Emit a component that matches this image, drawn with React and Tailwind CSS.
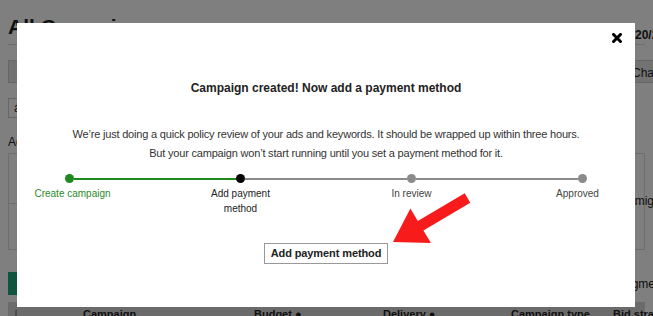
import React from 'react';

const steps = [
  { label: 'Create campaign', dot: 'bg-[#1e8a1e]', text: 'ml-[6px] text-[#2a8a2a]' },
  { label: ['Add payment', 'method'], dot: 'bg-black', text: 'text-[#222]' },
  { label: 'In review', dot: 'bg-[#8a8a8a]', text: 'text-[#444]' },
  { label: 'Approved', dot: 'bg-[#8a8a8a]', text: 'mr-[10px] text-[#444]' },
];

const Step = ({ step }) => (
  <div className="flex w-[9px] shrink-0 flex-col items-center">
    <div className={`h-[9px] w-[9px] rounded-full ${step.dot}`} />
    <div className={`mt-[3px] whitespace-nowrap text-center text-[10px] leading-[15px] ${step.text}`}>
      {Array.isArray(step.label) ? (
        <>
          {step.label[0]}
          <br />
          {step.label[1]}
        </>
      ) : (
        step.label
      )}
    </div>
  </div>
);

const Stepper = () => (
  <div className="mx-auto flex w-[522px] items-start">
    <Step step={steps[0]} />
    <div className="mt-[4px] h-[2px] flex-1 bg-[#1e8a1e]" />
    <Step step={steps[1]} />
    <div className="mt-[4px] h-[2px] flex-1 bg-[#8a8a8a]" />
    <Step step={steps[2]} />
    <div className="mt-[4px] h-[2px] flex-1 bg-[#8a8a8a]" />
    <Step step={steps[3]} />
  </div>
);

// the page behind the dialog
const Page = () => (
  <div className="flex flex-col px-2 text-[#222]">
    <div className="flex h-[45px] shrink-0 items-start border-b border-[#ddd] pt-[16px]">
      <h1 className="text-[21px] font-bold leading-[22px]">All Campaigns</h1>
      <span className="ml-auto w-[20px] shrink-0 whitespace-nowrap pt-[10px] text-[12px] font-bold">1/20/2017</span>
    </div>
    <div className="mt-[15px] flex h-[23px] shrink-0 justify-between">
      <div className="w-[90px] border border-[#ccc] bg-[#e4e4e4]" />
      <div className="mr-[-40px] w-[60px] border border-[#ccc] bg-[#e4e4e4] pl-[6px] pt-[3px] text-[12px]">Change</div>
    </div>
    <div className="mt-[15px] flex h-[20px] w-[70px] shrink-0 items-center border border-[#ccc] pl-[5px] text-[12px]">áll</div>
    <div className="mt-[17px] h-[15px] shrink-0 text-[12px] leading-[15px]">Ad groups</div>
    <div className="mt-[3px] flex h-[97px] shrink-0 flex-col border border-[#ddd]">
      <div className="flex h-[50px] shrink-0 justify-end border-b border-[#ddd]" />
      <div className="mt-[-10px] flex justify-end text-[12px] leading-[14px]">
        <span className="mr-[-20px]">might</span>
      </div>
    </div>
    <div className="mt-[22px] flex h-[23px] shrink-0 items-center justify-between">
      <div className="h-[23px] w-[60px] bg-[#1fa87f]" />
      <span className="mr-[-20px] text-[12px]">Segment</span>
    </div>
    <div className="mt-[7px] flex h-[24px] shrink-0 items-center whitespace-nowrap bg-[#d6d6d6] text-[11px] font-bold">
      <div className="ml-[7px] h-[9px] w-[9px] border border-[#999] bg-white" />
      <div className="ml-[27px] h-[8px] w-[8px] rounded-full bg-[#555]" />
      <span className="ml-[39px] w-[171px] shrink-0">Campaign</span>
      <span className="w-[129px] shrink-0">Budget ●</span>
      <span className="w-[128px] shrink-0">Delivery ●</span>
      <span className="w-[102px] shrink-0">Campaign type</span>
      <span className="shrink-0">Bid strategy</span>
    </div>
  </div>
);

const Arrow = () => (
  <svg className="pointer-events-none absolute left-0 top-0" width="653" height="316">
    <polygon
      fill="#f71b1b"
      points="393,242 431,243 423.4,230.4 470.3,202.7 464.7,193.3 417.8,221 410.4,208.5"
    />
  </svg>
);

export default function App() {
  return (
    <div className="relative h-[316px] w-[653px] overflow-hidden bg-white font-['Liberation_Sans',Arial,sans-serif]">
      <Page />
      <div className="absolute inset-0 bg-black/50" />
      <div className="absolute left-[17px] top-[23px] flex h-[284px] w-[618px] flex-col bg-white">
        <div className="flex justify-end pr-[13px] pt-[10px]">
          <svg width="10" height="10" viewBox="0 0 10 10">
            <path d="M1.5 1.5 L8.5 8.5 M8.5 1.5 L1.5 8.5" stroke="#000" strokeWidth="3" strokeLinecap="square" />
          </svg>
        </div>
        <h2 className="mt-[37px] text-center text-[12px] font-bold leading-[16px] text-[#222]">
          Campaign created! Now add a payment method
        </h2>
        <div className="mt-[29px] text-center text-[11px] leading-[19px] tracking-[-0.19px] text-[#333]">
          <p>We’re just doing a quick policy review of your ads and keywords. It should be wrapped up within three hours.</p>
          <p>But your campaign won’t start running until you set a payment method for it.</p>
        </div>
        <div className="mt-[11px]">
          <Stepper />
        </div>
        <div className="mt-[27px] flex justify-center">
          <button className="h-[21px] border border-[#999] bg-white px-[6px] text-[11px] font-bold tracking-[-0.1px] text-[#222]">
            Add payment method
          </button>
        </div>
      </div>
      <Arrow />
    </div>
  );
}
